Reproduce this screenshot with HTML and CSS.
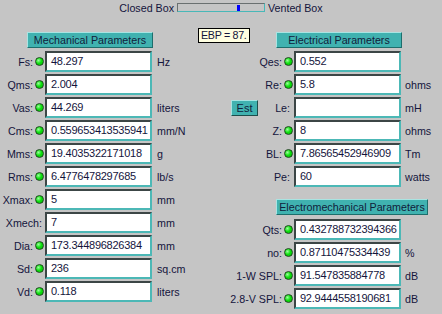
FILE: index.html
```html
<!DOCTYPE html>
<html lang="en">

<head>
    <meta charset="UTF-8">
    <title>Speaker Parameters</title>
    <link rel="stylesheet" href="styles.css">
</head>

<body>
    <div class="topbar">
        <span>Closed Box</span>
        <div class="slider"><span class="thumb"></span></div>
        <span>Vented Box</span>
    </div>

    <div class="panels">
        <section class="panel mech">
            <div class="head-row">
                <div class="header">Mechanical Parameters</div>
            </div>
            <div class="row"><div class="label">Fs:<i class="bulb"></i></div><div class="field">48.297</div><span class="unit">Hz</span></div>
            <div class="row"><div class="label">Qms:<i class="bulb"></i></div><div class="field">2.004</div><span class="unit"></span></div>
            <div class="row"><div class="label">Vas:<i class="bulb"></i></div><div class="field">44.269</div><span class="unit">liters</span></div>
            <div class="row"><div class="label">Cms:<i class="bulb"></i></div><div class="field">0.559653413535941</div><span class="unit">mm/N</span></div>
            <div class="row"><div class="label">Mms:<i class="bulb"></i></div><div class="field">19.4035322171018</div><span class="unit">g</span></div>
            <div class="row"><div class="label">Rms:<i class="bulb"></i></div><div class="field">6.4776478297685</div><span class="unit">lb/s</span></div>
            <div class="row"><div class="label">Xmax:<i class="bulb"></i></div><div class="field">5</div><span class="unit">mm</span></div>
            <div class="row"><div class="label nobulb">Xmech:</div><div class="field">7</div><span class="unit">mm</span></div>
            <div class="row"><div class="label">Dia:<i class="bulb"></i></div><div class="field">173.344896826384</div><span class="unit">mm</span></div>
            <div class="row"><div class="label">Sd:<i class="bulb"></i></div><div class="field">236</div><span class="unit">sq.cm</span></div>
            <div class="row"><div class="label">Vd:<i class="bulb"></i></div><div class="field">0.118</div><span class="unit">liters</span></div>
        </section>

        <section class="panel elec">
            <div class="head-row">
                <div class="ebp">EBP = 87.</div>
                <div class="header">Electrical Parameters</div>
            </div>
            <div class="row"><div class="label">Qes:<i class="bulb"></i></div><div class="field">0.552</div><span class="unit"></span></div>
            <div class="row"><div class="label">Re:<i class="bulb"></i></div><div class="field">5.8</div><span class="unit">ohms</span></div>
            <div class="row"><div class="label nobulb"><button class="est">Est</button><span class="spacer"></span>Le:</div><div class="field"></div><span class="unit">mH</span></div>
            <div class="row"><div class="label">Z:<i class="bulb"></i></div><div class="field">8</div><span class="unit">ohms</span></div>
            <div class="row"><div class="label">BL:<i class="bulb"></i></div><div class="field">7.86565452946909</div><span class="unit">Tm</span></div>
            <div class="row"><div class="label nobulb">Pe:</div><div class="field">60</div><span class="unit">watts</span></div>

            <div class="header wide">Electromechanical Parameters</div>
            <div class="row"><div class="label">Qts:<i class="bulb"></i></div><div class="field">0.432788732394366</div><span class="unit"></span></div>
            <div class="row"><div class="label">no:<i class="bulb"></i></div><div class="field">0.87110475334439</div><span class="unit">%</span></div>
            <div class="row"><div class="label">1-W SPL:<i class="bulb"></i></div><div class="field">91.547835884778</div><span class="unit">dB</span></div>
            <div class="row"><div class="label">2.8-V SPL:<i class="bulb"></i></div><div class="field">92.9444558190681</div><span class="unit">dB</span></div>
        </section>
    </div>
</body>

</html>
```

FILE: styles.css
```css
body {
    margin: 0;
    font-family: 'Liberation Sans', Arial, sans-serif;
    font-size: 10.7px;
    color: #14143c;
    background-color: #c5c5c5;
    width: 442px;
    height: 314px;
    overflow: hidden;
}

.topbar {
    display: flex;
    justify-content: center;
    align-items: center;
    gap: 3px;
    height: 15px;
}

.slider {
    position: relative;
    width: 86px;
    height: 7px;
    border: 1px solid;
    border-color: #6a7070 #48b8b8 #48b8b8 #6a7070;
}

.slider .thumb {
    position: absolute;
    left: 59px;
    top: 1px;
    width: 3px;
    height: 6px;
    background-color: #0000ff;
}

.panels {
    display: flex;
    margin-top: 13px;
}

.panel.mech {
    width: 198px;
}

.panel.elec {
    width: 244px;
}

.head-row {
    display: flex;
    align-items: flex-start;
    height: 20px;
    margin-bottom: 3px;
}

.header {
    box-sizing: border-box;
    width: 126px;
    height: 16px;
    line-height: 14px;
    text-align: center;
    background-color: #40b2b0;
    border: 1px solid;
    border-color: #a8e4e2 #1e6e6c #1e6e6c #a8e4e2;
    color: #10203a;
    white-space: nowrap;
}

.mech .header {
    margin-top: 4px;
    margin-left: 27px;
}

.ebp {
    box-sizing: border-box;
    width: 52px;
    height: 15px;
    line-height: 13px;
    padding-left: 2px;
    background-color: #ffffe1;
    border: 1px solid #000;
    letter-spacing: -0.3px;
    white-space: nowrap;
    overflow: hidden;
}

.elec .head-row .header {
    margin-top: 4px;
    margin-left: 26px;
}

.header.wide {
    width: 152px;
    margin: 12px 0 4px 78px;
}

.row {
    display: flex;
    align-items: center;
    height: 21px;
    margin-bottom: 2px;
}

.label {
    box-sizing: border-box;
    display: flex;
    align-items: center;
    justify-content: flex-end;
    white-space: nowrap;
}

.mech .label {
    width: 45px;
    padding-right: 1px;
}

.elec .label {
    width: 96px;
    padding-right: 1px;
}

.label.nobulb {
    padding-right: 3px;
}

.elec .label.nobulb {
    padding-right: 4px;
}

.bulb {
    display: inline-block;
    box-sizing: border-box;
    width: 9px;
    height: 9px;
    margin-left: 2px;
    border-radius: 50%;
    border: 1px solid #1c4a1c;
    background: radial-gradient(circle at 35% 35%, #9cff9c 0, #10e010 45%, #00b800 100%);
}

.field {
    box-sizing: border-box;
    width: 107px;
    height: 21px;
    line-height: 17px;
    padding-left: 4px;
    background-color: #fff;
    border: 2px solid;
    border-color: #3c4646 #4cb8b6 #4cb8b6 #3c4646;
    letter-spacing: -0.25px;
    font-size: 11px;
    white-space: nowrap;
    overflow: hidden;
}

.unit {
    margin-left: 5px;
}

.elec .unit {
    margin-left: 4px;
}

.spacer {
    flex: 1;
}

.est {
    box-sizing: border-box;
    width: 27px;
    height: 16px;
    margin-left: 33px;
    padding: 0;
    font-family: inherit;
    font-size: 11px;
    color: #10203a;
    background-color: #40b2b0;
    border: 1px solid;
    border-color: #a8e4e2 #1e4e4c #1e4e4c #a8e4e2;
}
```
